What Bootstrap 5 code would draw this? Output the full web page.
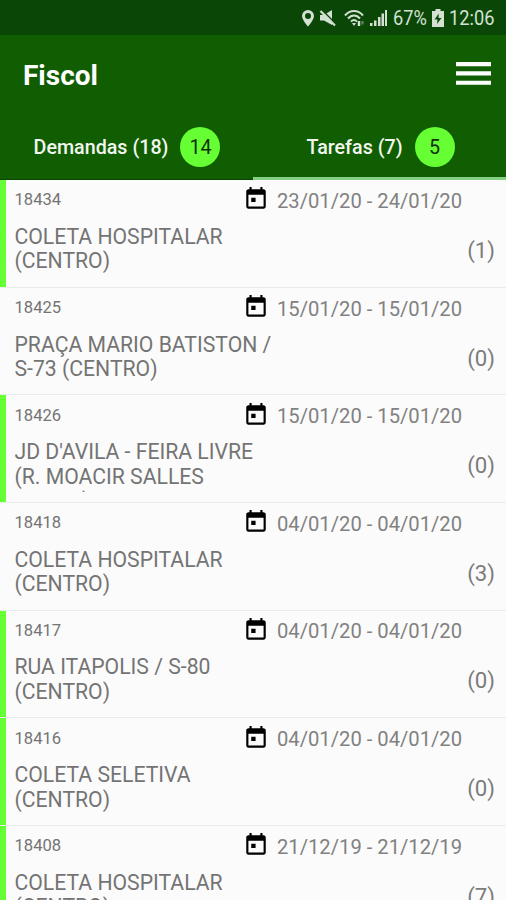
<!DOCTYPE html>
<html lang="pt-BR">
<head>
<meta charset="utf-8">
<meta name="viewport" content="width=device-width, initial-scale=1">
<title>Fiscol</title>
<link href="https://cdn.jsdelivr.net/npm/bootstrap@5.3.0/dist/css/bootstrap.min.css" rel="stylesheet">
<style>
body{font-family:Roboto,"Liberation Sans",sans-serif;background:#fbfbfb;color:#747474}
.app-screen{height:900px}
.status-bar{height:35px;background:#0a4707;color:#d3e0d2}
.status-bar svg{display:block;flex:none}
.status-text{font-size:20.5px;line-height:24px;white-space:nowrap;transform-origin:left center;transform:scaleX(.89)}
.ico-wifi{margin-left:7px}
.ico-signal{margin-left:4px}
.txt-batt{width:39px;margin-left:5px}
.txt-clock{width:46px;margin:0 11px 0 5px}
.app-head{height:80px;background:#115e02;padding:0 15px 0 23px}
.app-title{font-size:28px;font-weight:700;line-height:32px;color:#fff;padding-top:1px}
.app-tabs{height:65px;background:#115e02;color:#f1f7ef}
.app-tab{font-size:19.7px;font-weight:500;line-height:24px;gap:12px;border-bottom:1px solid #0c4503;padding-left:1px}
.app-tab.current{border-bottom:3px solid #84d183;padding-top:2px;padding-left:2px}
.tab-label{padding-top:2px}
.count-dot{width:40px;height:40px;border-radius:50%;background:#66ff33;color:#10300a;font-weight:400;padding-top:1px}
.task{height:107.65px;border-bottom:1.5px solid #ebebeb;position:relative;padding:.4px 11px 0 14.5px}
.task.open{box-shadow:inset 6px 0 #66ff33}
.task-top{height:40px;margin-bottom:4.5px}
.task-id{font-size:16.6px;width:228.5px;line-height:20px}
.task-date{font-size:20.2px;line-height:24px;margin-left:8px;padding-top:1px;color:#818181}
.task-icon{width:26px;height:26px;margin-top:-2px}
.task-name{font-size:21.2px;line-height:24.5px;width:262px;height:52px;overflow:hidden}
.task-count{font-size:22.2px;line-height:26px;margin-top:-2px;color:#7c7c7c}
</style>
<script src="https://cdn.jsdelivr.net/npm/bootstrap@5.3.0/dist/js/bootstrap.bundle.min.js"></script>
</head>
<body>
<svg class="d-none"><symbol id="cal" viewBox="0 0 24 24"><path fill-rule="evenodd" d="M19 3h-1V1h-2v2H8V1H6v2H5c-1.1 0-2 .9-2 2v14c0 1.1.9 2 2 2h14c1.1 0 2-.9 2-2V5c0-1.1-.9-2-2-2zm0 16H5V8h14v11zM7.6 10.8h4v4h-4z"/></symbol></svg>
<div class="app-screen d-flex flex-column overflow-hidden">
  <div class="status-bar d-flex align-items-center justify-content-end flex-shrink-0">
    <svg width="14" height="18" viewBox="0 0 14 18" fill="currentColor"><path fill-rule="evenodd" d="M7 1a6 6 0 0 0-6 6c0 4 6 10.500 6 10.500S13 11 13 7a6 6 0 0 0-6-6zm0 3a3 3 0 1 1 0 6 3 3 0 0 1 0-6z"/></svg>
    <svg class="ms-1" width="18" height="18" viewBox="0 0 18 18" fill="currentColor"><path d="M1 6h4l8-5v15l-8-4.500H1z"/><path d="M2.500 .5l15 15" stroke="#0a4707" stroke-width="1.500"/><path d="M1.500 2l14.500 14.500" stroke="currentColor" stroke-width="2.200"/></svg>
    <svg class="ico-wifi" width="22" height="18" viewBox="0 0 22 18" fill="none" stroke="currentColor" stroke-width="2"><path d="M1 6.500c5-6 13-6 18 0M4 9.500c3.500-4 8.500-4 12 0M7 12.700c2-2.300 4-2.300 6 0"/><path d="M8 14h4l-2 3z" fill="currentColor" stroke="none"/><path d="M15 12v5" stroke-width="2.500"/><path d="M18.500 12v3.500" stroke-opacity=".45"/></svg>
    <svg class="ico-signal" width="18" height="18" viewBox="0 0 18 18" fill="currentColor"><path d="M0 14h2.500v3H0zM4 11.500h2.500V17H4zM8 8h2.500v9H8zM11.500 4.500H14V17h-2.500zM15 1h2v16h-2z"/></svg>
    <span class="txt-batt"><span class="status-text d-block">67%</span></span>
    <svg width="12" height="18" viewBox="0 0 12 18"><path d="M3.500 0h5v2H12v16H0V2h3.500z" fill="currentColor"/><path d="M6.800 4.500 2.500 10.500h3L5 15l4.500-6h-3z" fill="#0a4707"/></svg>
    <span class="txt-clock"><span class="status-text d-block">12:06</span></span>
  </div>
  <header class="app-head d-flex align-items-center justify-content-between flex-shrink-0">
    <h1 class="app-title m-0">Fiscol</h1>
    <svg width="35" height="26" viewBox="0 0 35 26" fill="#fff"><path d="M0 0h35v4.300H0zM0 9.300h35v4.300H0zM0 18.800h35v4H0z"/></svg>
  </header>
  <nav class="app-tabs row g-0 flex-shrink-0">
    <div class="app-tab col-6 d-flex align-items-center justify-content-center"><span class="tab-label">Demandas (18)</span><span class="count-dot d-flex align-items-center justify-content-center">14</span></div>
    <div class="app-tab current col-6 d-flex align-items-center justify-content-center"><span class="tab-label">Tarefas (7)</span><span class="count-dot d-flex align-items-center justify-content-center">5</span></div>
  </nav>
  <main>
    <div class="task open"><div class="task-top d-flex align-items-center"><span class="task-id">18434</span><svg class="task-icon"><use href="#cal"/></svg><span class="task-date">23/01/20 - 24/01/20</span></div><div class="d-flex justify-content-between align-items-center"><div class="task-name">COLETA HOSPITALAR<br>(CENTRO)</div><span class="task-count">(1)</span></div></div>
    <div class="task"><div class="task-top d-flex align-items-center"><span class="task-id">18425</span><svg class="task-icon"><use href="#cal"/></svg><span class="task-date">15/01/20 - 15/01/20</span></div><div class="d-flex justify-content-between align-items-center"><div class="task-name">PRAÇA MARIO BATISTON /<br>S-73 (CENTRO)</div><span class="task-count">(0)</span></div></div>
    <div class="task open"><div class="task-top d-flex align-items-center"><span class="task-id">18426</span><svg class="task-icon"><use href="#cal"/></svg><span class="task-date">15/01/20 - 15/01/20</span></div><div class="d-flex justify-content-between align-items-center"><div class="task-name">JD D'AVILA - FEIRA LIVRE<br>(R. MOACIR SALLES<br>SOUZA)</div><span class="task-count">(0)</span></div></div>
    <div class="task"><div class="task-top d-flex align-items-center"><span class="task-id">18418</span><svg class="task-icon"><use href="#cal"/></svg><span class="task-date">04/01/20 - 04/01/20</span></div><div class="d-flex justify-content-between align-items-center"><div class="task-name">COLETA HOSPITALAR<br>(CENTRO)</div><span class="task-count">(3)</span></div></div>
    <div class="task open"><div class="task-top d-flex align-items-center"><span class="task-id">18417</span><svg class="task-icon"><use href="#cal"/></svg><span class="task-date">04/01/20 - 04/01/20</span></div><div class="d-flex justify-content-between align-items-center"><div class="task-name">RUA ITAPOLIS / S-80<br>(CENTRO)</div><span class="task-count">(0)</span></div></div>
    <div class="task open"><div class="task-top d-flex align-items-center"><span class="task-id">18416</span><svg class="task-icon"><use href="#cal"/></svg><span class="task-date">04/01/20 - 04/01/20</span></div><div class="d-flex justify-content-between align-items-center"><div class="task-name">COLETA SELETIVA<br>(CENTRO)</div><span class="task-count">(0)</span></div></div>
    <div class="task open"><div class="task-top d-flex align-items-center"><span class="task-id">18408</span><svg class="task-icon"><use href="#cal"/></svg><span class="task-date">21/12/19 - 21/12/19</span></div><div class="d-flex justify-content-between align-items-center"><div class="task-name">COLETA HOSPITALAR<br>(CENTRO)</div><span class="task-count">(7)</span></div></div>
  </main>
</div>
</body>
</html>
